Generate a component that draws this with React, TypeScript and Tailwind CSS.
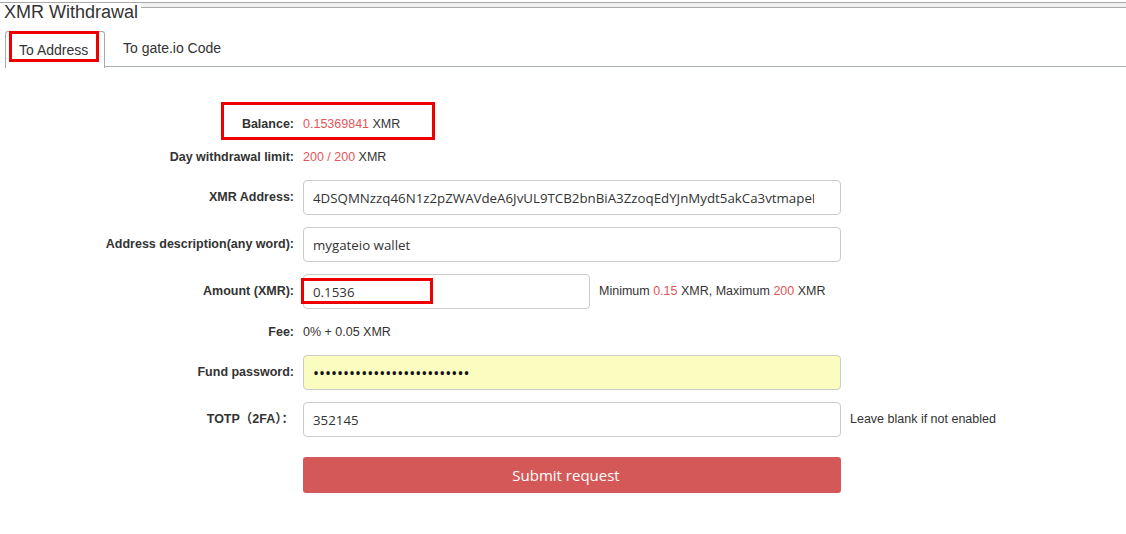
import React from "react";

const arial = { fontFamily: '"Liberation Sans", Arial, sans-serif' };

function Label({ children }: { children: React.ReactNode }) {
  return (
    <div className="w-[294px] shrink-0 text-right text-[12.5px] font-bold text-[#333]">
      {children}
    </div>
  );
}

const inputCls =
  "h-[35px] rounded-[4px] border border-[#ccc] pl-[9px] pr-[26px] text-[13.3px] text-[#333] outline-none [font-family:'Open_Sans','Noto_Sans',sans-serif]";

export default function App() {
  return (
    <div className="min-h-[534px] w-full bg-white" style={arial}>
      {/* top band */}
      <div className="mt-[2px] h-[6px] border-y border-[#a9a9a9] bg-[#f0f0f0]" />
      <div className="relative -mt-[5px] block h-[19px] w-fit overflow-hidden bg-white pl-[4px] pr-[3px] text-[18px] leading-[19px] text-[#333]">
        XMR Withdrawal
      </div>

      {/* tabs */}
      <div className="ml-[5px] mt-[9px] flex h-[36px] border-b border-[#a6adb3] text-[14px] text-[#333]">
        <div className="relative -mb-px flex h-[37px] w-[100px] items-center rounded-t-[3px] border border-b-0 border-[#aaa] bg-white pl-[13px]">
          To Address
          <div className="absolute -top-px left-[3px] h-[31px] w-[90px] border-[3px] border-[#ee0000]" />
        </div>
        <div className="flex items-center pl-[18px]">To gate.io Code</div>
      </div>

      {/* form */}
      <div className="pt-[40px]">
        <div className="relative flex h-[34px] items-center gap-[9px]">
          <Label>Balance:</Label>
          <div className="text-[12.5px] text-[#333]">
            <span className="text-[#e4555a]">0.15369841</span> XMR
          </div>
          <div className="absolute -top-[5px] left-[221px] h-[38px] w-[214px] border-[3px] border-[#ee0000]" />
        </div>

        <div className="flex h-[32px] items-center gap-[9px]">
          <Label>Day withdrawal limit:</Label>
          <div className="text-[12.5px] text-[#333]">
            <span className="text-[#e4555a]">200 / 200</span> XMR
          </div>
        </div>

        <div className="mt-[7px] flex items-center gap-[9px]">
          <Label>XMR Address:</Label>
          <input
            readOnly
            className={`${inputCls} w-[538px] bg-white`}
            value="4DSQMNzzq46N1z2pZWAVdeA6JvUL9TCB2bnBiA3ZzoqEdYJnMydt5akCa3vtmapeLz8Qh"
          />
        </div>

        <div className="mt-[12px] flex items-center gap-[9px]">
          <Label>Address description(any word):</Label>
          <input readOnly className={`${inputCls} w-[538px] bg-white`} value="mygateio wallet" />
        </div>

        <div className="mt-[12px] flex items-center gap-[9px]">
          <Label>Amount (XMR):</Label>
          <div className="relative">
            <input readOnly className={`${inputCls} block w-[287px] bg-white`} value="0.1536" />
            <div className="absolute left-[-2px] top-[4px] h-[26px] w-[132px] border-[3px] border-[#ee0000]" />
          </div>
          <div className="text-[12.5px] text-[#333]">
            Minimum <span className="text-[#e4555a]">0.15</span> XMR, Maximum{" "}
            <span className="text-[#e4555a]">200</span> XMR
          </div>
        </div>

        <div className="flex h-[46px] items-center gap-[9px]">
          <Label>Fee:</Label>
          <div className="text-[12.5px] text-[#333]">0% + 0.05 XMR</div>
        </div>

        <div className="flex items-center gap-[9px]">
          <Label>Fund password:</Label>
          <input
            readOnly
            type="password"
            className={`${inputCls} w-[538px] bg-[#fafcc0] !text-[16px] !text-[#111]`}
            value="abcdefghijklmnopqrstuvwxyz"
          />
        </div>

        <div className="mt-[12px] flex items-center gap-[9px]">
          <div
            className="w-[294px] shrink-0 text-right text-[12.5px] font-bold text-[#333]"
            style={{ fontFamily: '"Liberation Sans", "Noto Sans CJK SC", sans-serif' }}
          >
            TOTP（2FA）：
          </div>
          <input readOnly className={`${inputCls} w-[538px] bg-white`} value="352145" />
          <div className="text-[12.5px] text-[#333]">Leave blank if not enabled</div>
        </div>

        <div className="mt-[20px] flex gap-[9px]">
          <div className="w-[294px] shrink-0" />
          <button className="h-[36px] w-[538px] rounded-[3px] bg-[#d55858] pr-[12px] text-[15px] text-white [font-family:'Open_Sans','Noto_Sans',sans-serif]">
            Submit request
          </button>
        </div>
      </div>
    </div>
  );
}
